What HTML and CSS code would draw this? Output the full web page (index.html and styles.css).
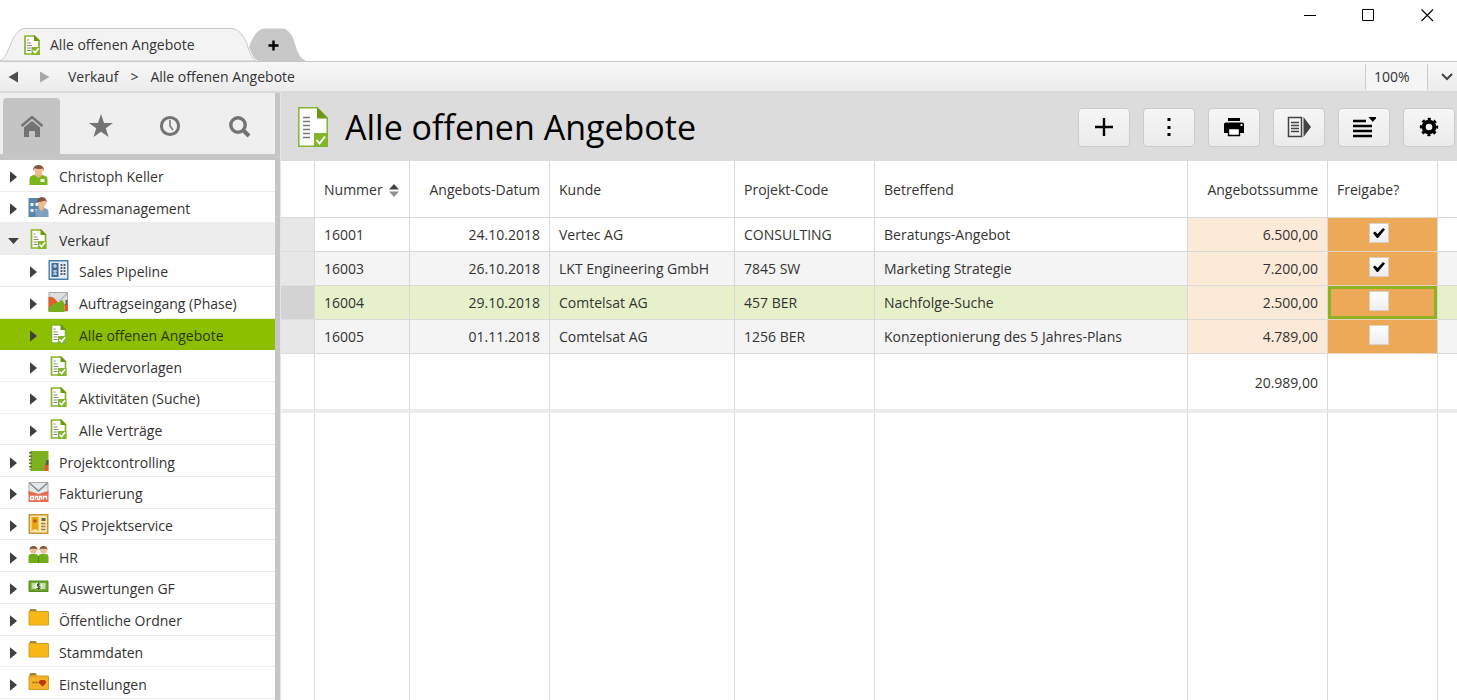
FILE: index.html
```html
<!DOCTYPE html>
<html lang="de">
<head>
<meta charset="utf-8">
<title>Alle offenen Angebote</title>
<link rel="stylesheet" href="styles.css">
</head>
<body>
<svg class="sprite" aria-hidden="true">
  <symbol id="doc" viewBox="0 0 30 40">
    <path d="M.8.8H19L29.200 11V39.200H.8z" fill="#fff" stroke="#86b52a" stroke-width="1.500"/>
    <path d="M19 0L30 11.500H19z" fill="#6a9a12"/>
    <path d="M5 10.500h7M5 14.500h7M5 18.500h7M5 22.500h7M5 26.500h7M5 30.500h7" stroke="#777" stroke-width="1.300"/>
    <path d="M16 26h14v14H16z" fill="#83b62a"/>
    <path d="M18.500 33l3 3.500L27 29.500" fill="none" stroke="#fff" stroke-width="1.900"/>
  </symbol>
  <symbol id="doc-small" viewBox="0 0 16 20">
    <path d="M1 1h9.500L15 5.500V19H1z" fill="#fff" stroke="#86b52a" stroke-width="1.700"/>
    <path d="M10 0l6 6h-6z" fill="#6a9a12"/>
    <path d="M3 5h2M3 8h4M3 10.500h5M3 13h4M3 15.500h4" stroke="#858a7c" stroke-width="1.200"/>
    <path d="M7.500 12H16v8H7.500z" fill="#83b62a"/>
    <path d="M9 15.500l2 2.300 3.700-4.500" fill="none" stroke="#fff" stroke-width="1.600"/>
  </symbol>
  <symbol id="right" viewBox="0 0 11 12"><path d="M2 .3L9 6 2 11.700z" fill="#404040"/></symbol>
  <symbol id="down" viewBox="0 0 11 12"><path d="M0 3h11L5.500 9z" fill="#404040"/></symbol>
  <symbol id="person" viewBox="0 0 20 20">
    <path d="M1 20v-6q0-3 4-4h9q5 1 5 4v6z" fill="#7db61c"/>
    <path d="M6 10l4 3 4-3-1-2H7z" fill="#e9b58c"/>
    <circle cx="10" cy="5.500" r="4.300" fill="#efbd93"/>
    <path d="M4.800 6Q4 .3 10 0q6 .3 5.200 6L14 3.500Q10 4.800 6 3.300z" fill="#84543a"/>
    <path d="M12 14h4v3h-4z" fill="#f4fbe8"/>
  </symbol>
  <symbol id="contact" viewBox="0 0 20 20">
    <path d="M0 1h11v19H0z" fill="#5786ad"/>
    <path d="M2 6h3v3H2zM7 6h3v3H7zM2 12h3v3H2zM7 12h3v3H7z" fill="#f0f7fc"/>
    <path d="M7 20v-5q0-3 4-4h5q4 1 4 4v5z" fill="#7e9fbd"/>
    <path d="M10 11l3 3.500L16 11v-2h-6z" fill="#e9b58c"/>
    <circle cx="13.500" cy="5.500" r="4.300" fill="#efbd93"/>
    <path d="M8.500 5Q8.500.3 13.500 0q5 .3 4.700 6L17 3.500Q12 5 8.500 5z" fill="#84543a"/>
  </symbol>
  <symbol id="pipeline" viewBox="0 0 20 20">
    <path d="M.7.700h18.600v18.600H.7z" fill="#e4edf4" stroke="#487ca5" stroke-width="1.400"/>
    <path d="M3 3h7v14H3z" fill="#3f6f98"/><path d="M6.500 4v4M4.500 6h4M4.500 11h4M4.500 14h4M6.500 10v5" stroke="#dcebf5"/>
    <path d="M13 4v12M16 4v12" stroke="#555" stroke-width="1.800" stroke-dasharray="2 1"/>
  </symbol>
  <symbol id="chart" viewBox="0 0 20 20">
    <path d="M.5.500h18.500v18.500H.5z" fill="#dedede" stroke="#aaa"/>
    <path d="M0 5q5-1 9 5l2 4-11 5z" fill="#e0602c"/>
    <path d="M0 20v-4l5-4 5-2 4-2 2 4v8z" fill="#78ae1b"/>
    <path d="M16 12h3.500v7H16z" fill="#e0602c"/><path d="M17 8h2v5h-2z" fill="#666"/>
    <path d="M11 9l8-8" stroke="#999"/>
  </symbol>
  <symbol id="notebook" viewBox="0 0 20 20">
    <path d="M2 0h18v20H2z" fill="#7cb01d"/><path d="M2 1v18" stroke="#57743a" stroke-width="3" stroke-dasharray="1.500 2"/>
    <path d="M18 9l-1 5h3V9z" fill="#555"/><path d="M16 14h4v6h-4z" fill="#e25d33"/>
  </symbol>
  <symbol id="invoice" viewBox="0 0 20 20">
    <path d="M.5.500h19v12H.5z" fill="#e5e8e9" stroke="#a5a9aa"/><path d="M1 1l9 8 9-8" fill="none" stroke="#7f8a90" stroke-width="1.500"/>
    <path d="M0 9l4 1 6 2 6-2 4-1v11H0z" fill="#e66c50"/>
    <path d="M2 17.500v-3h3v3zM7 17.500v-3h2v3h2v-3h2v3M15 17.500v-3h3v3" fill="none" stroke="#fff" stroke-width="1.300"/>
  </symbol>
  <symbol id="certificate" viewBox="0 0 20 20">
    <path d="M.8.800h18.400v18.400H.8z" fill="#fbe9b4" stroke="#c9952e" stroke-width="1.600"/>
    <path d="M3 3h7v14l-3.500-2L3 17z" fill="#e9a413"/><circle cx="6.500" cy="7" r="1.800" fill="#bb5113"/>
    <path d="M13 4h4v3h-4z" fill="#746230"/><path d="M12.500 9.500H17M12.500 12.500H17M12.500 15.500H17" stroke="#9b8242" stroke-width="1.500"/>
  </symbol>
  <symbol id="people" viewBox="0 0 20 20">
    <path d="M0 17v-6q0-3 3-3h4q3 0 3 3v6zM10 17v-6q0-3 3-3h4q3 0 3 3v6z" fill="#71ad19"/>
    <path d="M10 10v7" stroke="#4c8410" stroke-width=".8"/>
    <circle cx="5" cy="4.500" r="3.300" fill="#efbd93"/><circle cx="15" cy="4.500" r="3.300" fill="#efbd93"/>
    <path d="M1 4Q1 0 5 0t4 4L7.500 2.800h-5zM11 4q0-4 4-4t4 4l-1.500-1.200h-5z" fill="#84543a"/>
  </symbol>
  <symbol id="money" viewBox="0 0 20 20">
    <path d="M.5 4h19v10.500H.5z" fill="#6da52c" stroke="#568b22"/><path d="M3 6h14v6H3z" fill="#c6dfa0"/>
    <ellipse cx="10" cy="9" rx="4" ry="3.500" fill="#eaf4da"/><path d="M12 7H9v2.200h2.500v2.300H8M10.200 5v8" fill="none" stroke="#35591b"/>
  </symbol>
  <symbol id="folder" viewBox="0 0 20 20">
    <path d="M1 3V1l1-1h5l2 2.500z" fill="#a8842f"/>
    <path d="M.5 2.500H20v13.500H.5z" fill="#f8b817" stroke="#dda01c"/>
  </symbol>
  <symbol id="folder-heart" viewBox="0 0 20 20">
    <path d="M1 3V1l1-1h5l2 2.500z" fill="#a8842f"/>
    <path d="M.5 3H20v13.500H.5z" fill="#f4b326" stroke="#d39a21"/>
    <path d="M4 9.500h7" stroke="#8e6424" stroke-width="1.500" stroke-dasharray="2 1"/>
    <path d="M14 13.500L10.500 10q-.5-3.500 3.500-3 4-.5 3.500 3z" fill="#b8370e"/>
  </symbol>
</svg>

<header class="titlebar">
  <nav class="tabs" aria-label="Tabs">
    <button class="tab">
      <svg class="tab-shape" viewBox="0 0 256 33"><path d="M0 33Q5 31 9 20 16 1 24 .5H232Q241 1 247 16 251 31 256 33z" fill="#f3f3f3" stroke="#c9c9c9"/></svg>
      <svg class="tab-icon" width="16" height="20"><use href="#doc-small"/></svg>
      <span>Alle offenen Angebote</span>
    </button>
    <button class="tab-add" aria-label="Neuer Tab">
      <svg width="58" height="33" viewBox="0 0 58 33"><path d="M1 19Q7 1 17 .5H34Q43 1 47 16 51 31 58 33H10Q5 31 1 19z" fill="#c8c8c8"/><path d="M25.500 12.500v10M20.500 17.500h10" stroke="#000" stroke-width="2.400"/></svg>
    </button>
  </nav>
  <div class="window-buttons">
    <button aria-label="Minimieren"><svg width="13" height="13"><path d="M1 6.500h12" stroke="#000"/></svg></button>
    <button aria-label="Maximieren"><svg width="13" height="13"><path d="M.5.500h11v11H.5z" fill="none" stroke="#000"/></svg></button>
    <button aria-label="Schließen"><svg width="13" height="13"><path d="M.5.500l11.500 11.500M12 .5L.5 12" stroke="#000" stroke-width="1.100"/></svg></button>
  </div>
</header>

<div class="pathbar">
  <button class="path-button" aria-label="Zurück"><svg width="10" height="12"><path d="M10 .5L.5 6l9.500 5.500z" fill="#4d4d4d"/></svg></button>
  <button class="path-button" aria-label="Vorwärts"><svg width="10" height="12"><path d="M0 .5L9.500 6 0 11.500z" fill="#a8a8a8"/></svg></button>
  <nav class="crumbs" aria-label="Pfad"><a href="#verkauf">Verkauf</a><span>&gt;</span><a href="#angebote">Alle offenen Angebote</a></nav>
  <div class="zoom">
    <input class="zoom-value" aria-label="Zoom" value="100%">
    <button class="zoom-open" aria-label="Zoom wählen"><svg width="12" height="8"><path d="M1 1l5 5 5-5" fill="none" stroke="#444" stroke-width="2"/></svg></button>
  </div>
</div>

<div class="workspace">
  <aside class="sidebar">
    <div class="side-tabs">
      <button class="side-tab active" aria-label="Start"><svg width="24" height="24" viewBox="0 0 24 24"><path d="M1.500 12L12 3l10.500 9" fill="none" stroke="#737373" stroke-width="2.400"/><path d="M4 13.500L12 7l8 6.500V23h-5v-6H9v6H4z" fill="#737373"/></svg></button>
      <button class="side-tab" aria-label="Favoriten"><svg width="24" height="24" viewBox="0 0 24 24"><path d="M12 0l3 9h9l-7.200 5.300L19.500 23 12 17.800 4.500 23l2.700-8.700L0 9h9z" fill="#737373"/></svg></button>
      <button class="side-tab" aria-label="Verlauf"><svg width="24" height="24" viewBox="0 0 24 24"><circle cx="12" cy="12" r="8.600" fill="none" stroke="#737373" stroke-width="3"/><path d="M12 6v6l3 4" fill="none" stroke="#737373" stroke-width="1.500"/></svg></button>
      <button class="side-tab" aria-label="Suche"><svg width="24" height="24" viewBox="0 0 24 24"><circle cx="11" cy="11" r="7.200" fill="none" stroke="#737373" stroke-width="3.400"/><path d="M16 16l6 6" stroke="#737373" stroke-width="4"/></svg></button>
    </div>
    <ul class="tree">
      <li class="node"><svg class="arrow"><use href="#right"/></svg><svg class="icon"><use href="#person"/></svg><a href="#n1">Christoph Keller</a></li>
      <li class="node"><svg class="arrow"><use href="#right"/></svg><svg class="icon"><use href="#contact"/></svg><a href="#n2">Adressmanagement</a></li>
      <li class="node open"><svg class="arrow"><use href="#down"/></svg><svg class="icon"><use href="#doc-small"/></svg><a href="#n3">Verkauf</a></li>
      <li class="node child"><svg class="arrow"><use href="#right"/></svg><svg class="icon"><use href="#pipeline"/></svg><a href="#n4">Sales Pipeline</a></li>
      <li class="node child"><svg class="arrow"><use href="#right"/></svg><svg class="icon"><use href="#chart"/></svg><a href="#n5">Auftragseingang (Phase)</a></li>
      <li class="node child selected"><svg class="arrow"><use href="#right"/></svg><svg class="icon"><use href="#doc-small"/></svg><a href="#n6">Alle offenen Angebote</a></li>
      <li class="node child"><svg class="arrow"><use href="#right"/></svg><svg class="icon"><use href="#doc-small"/></svg><a href="#n7">Wiedervorlagen</a></li>
      <li class="node child"><svg class="arrow"><use href="#right"/></svg><svg class="icon"><use href="#doc-small"/></svg><a href="#n8">Aktivitäten (Suche)</a></li>
      <li class="node child"><svg class="arrow"><use href="#right"/></svg><svg class="icon"><use href="#doc-small"/></svg><a href="#n9">Alle Verträge</a></li>
      <li class="node"><svg class="arrow"><use href="#right"/></svg><svg class="icon"><use href="#notebook"/></svg><a href="#n10">Projektcontrolling</a></li>
      <li class="node"><svg class="arrow"><use href="#right"/></svg><svg class="icon"><use href="#invoice"/></svg><a href="#n11">Fakturierung</a></li>
      <li class="node"><svg class="arrow"><use href="#right"/></svg><svg class="icon"><use href="#certificate"/></svg><a href="#n12">QS Projektservice</a></li>
      <li class="node"><svg class="arrow"><use href="#right"/></svg><svg class="icon"><use href="#people"/></svg><a href="#n13">HR</a></li>
      <li class="node"><svg class="arrow"><use href="#right"/></svg><svg class="icon"><use href="#money"/></svg><a href="#n14">Auswertungen GF</a></li>
      <li class="node"><svg class="arrow"><use href="#right"/></svg><svg class="icon"><use href="#folder"/></svg><a href="#n15">Öffentliche Ordner</a></li>
      <li class="node"><svg class="arrow"><use href="#right"/></svg><svg class="icon"><use href="#folder"/></svg><a href="#n16">Stammdaten</a></li>
      <li class="node"><svg class="arrow"><use href="#right"/></svg><svg class="icon"><use href="#folder-heart"/></svg><a href="#n17">Einstellungen</a></li>
    </ul>
  </aside>

  <main class="content">
    <div class="page-head">
      <svg class="page-icon" width="30" height="40"><use href="#doc"/></svg>
      <h1>Alle offenen Angebote</h1>
      <div class="toolbar">
        <button aria-label="Neu"><svg width="24" height="24" viewBox="0 0 24 24"><path d="M12 3v18M3 12h18" stroke="#000" stroke-width="2.400"/></svg></button>
        <button aria-label="Mehr"><svg width="24" height="24" viewBox="0 0 24 24"><path d="M10.500 3h3v3h-3zM10.500 11h3v3h-3zM10.500 18h3v3h-3z"/></svg></button>
        <button aria-label="Drucken"><svg width="24" height="24" viewBox="0 0 24 24"><path d="M6 3h12v3H6zM2 9q0-1.500 2-1.500h16q2 0 2 1.500v9H2z"/><path d="M6.500 13.500h11v7h-11z" fill="#fff" stroke="#000" stroke-width="1.400"/><path d="M18.500 9h2v2h-2z" fill="#eee"/></svg></button>
        <button aria-label="Exportieren"><svg width="24" height="24" viewBox="0 0 24 24"><path d="M1.500 2.500h13v19h-13z" fill="none" stroke="#444" stroke-width="1.500"/><path d="M4 7.500h8M4 10.500h8M4 13.500h8M4 16.500h8" stroke="#444" stroke-width="1.300"/><path d="M16.500 2L24 12l-7.500 10z" fill="#444"/></svg></button>
        <button aria-label="Liste"><svg width="24" height="24" viewBox="0 0 24 24"><path d="M1 6h13M1 11h19M1 16h19M1 21h19" stroke="#000" stroke-width="2.600"/><path d="M16.500 2H25l-4.200 5z"/></svg></button>
        <button aria-label="Einstellungen"><svg width="24" height="24" viewBox="0 0 24 24"><circle cx="12" cy="12" r="5.300" fill="none" stroke="#000" stroke-width="4"/><circle cx="12" cy="12" r="8" fill="none" stroke="#000" stroke-width="2.400" stroke-dasharray="3.140 3.143" stroke-dashoffset="1.570"/></svg></button>
      </div>
    </div>
    <div class="grid-wrap">
      <table class="offers">
        <colgroup><col class="c-mark"><col class="c-number"><col class="c-date"><col class="c-customer"><col class="c-code"><col class="c-subject"><col class="c-sum"><col class="c-release"><col></colgroup>
        <thead><tr><th></th><th><button class="sort">Nummer<svg width="10" height="13"><path d="M0 5.500L5 0l5 5.500z" fill="#444"/><path d="M0 7.500h10L5 13z" fill="#909090"/></svg></button></th><th class="num">Angebots-Datum</th><th>Kunde</th><th>Projekt-Code</th><th>Betreffend</th><th class="num">Angebotssumme</th><th>Freigabe?</th><th></th></tr></thead>
        <tbody>
          <tr><td class="mark"></td><td>16001</td><td class="num">24.10.2018</td><td>Vertec AG</td><td>CONSULTING</td><td>Beratungs-Angebot</td><td class="num sum">6.500,00</td><td class="release"><input type="checkbox" aria-label="Freigabe 16001" checked></td><td></td></tr>
          <tr class="alt"><td class="mark"></td><td>16003</td><td class="num">26.10.2018</td><td>LKT Engineering GmbH</td><td>7845 SW</td><td>Marketing Strategie</td><td class="num sum">7.200,00</td><td class="release"><input type="checkbox" aria-label="Freigabe 16003" checked></td><td></td></tr>
          <tr class="current"><td class="mark"></td><td>16004</td><td class="num">29.10.2018</td><td>Comtelsat AG</td><td>457 BER</td><td>Nachfolge-Suche</td><td class="num sum">2.500,00</td><td class="release"><input type="checkbox" aria-label="Freigabe 16004"></td><td></td></tr>
          <tr class="alt"><td class="mark"></td><td>16005</td><td class="num">01.11.2018</td><td>Comtelsat AG</td><td>1256 BER</td><td>Konzeptionierung des 5 Jahres-Plans</td><td class="num sum">4.789,00</td><td class="release"><input type="checkbox" aria-label="Freigabe 16005"></td><td></td></tr>
          <tr class="total"><td></td><td></td><td></td><td></td><td></td><td></td><td class="num">20.989,00</td><td></td><td></td></tr>
          <tr class="filler"><td></td><td></td><td></td><td></td><td></td><td></td><td></td><td></td><td></td></tr>
        </tbody>
      </table>
    </div>
  </main>
</div>
</body>
</html>
```
FILE: styles.css
```css
* { box-sizing: border-box; }
html, body { height: 100%; }
body {
  margin: 0;
  display: flex;
  flex-direction: column;
  background: #fff;
  color: #333;
  font: 14px/20px "Open Sans", "Noto Sans", sans-serif;
}
button { margin: 0; padding: 0; border: 0; background: none; color: inherit; font: inherit; }
a { color: inherit; text-decoration: none; }
svg { display: block; flex: none; }
.sprite { position: absolute; width: 0; height: 0; }

.titlebar { display: flex; justify-content: space-between; height: 61px; flex: none; }
.tabs { display: flex; align-items: flex-end; }
.tab {
  position: relative;
  z-index: 1;
  display: flex;
  align-items: center;
  gap: 10px;
  width: 256px;
  height: 33px;
  padding-left: 24px;
}
.tab-shape { position: absolute; inset: 0; }
.tab-icon, .tab span { position: relative; }
.tab-add { margin-left: -8px; }
.window-buttons { display: flex; height: 30px; }
.window-buttons button { display: flex; align-items: center; justify-content: center; width: 59px; }

.pathbar {
  display: flex;
  align-items: center;
  flex: none;
  height: 32px;
  padding: 1px 0 0 8px;
  border-top: 1px solid #c8c8c8;
  border-bottom: 2px solid #dadada;
  background: linear-gradient(#f7f7f7, #ececec);
}
.path-button { width: 32px; }
.crumbs { display: flex; gap: 12px; flex: 1; margin-left: -4px; }
.zoom { display: flex; height: 26px; }
.zoom-value {
  width: 62px;
  padding: 0 8px;
  border: solid #ccc;
  border-width: 0 0 0 1px;
  background: #f5f5f5;
  color: inherit;
  font: inherit;
}
.zoom-open { display: flex; align-items: center; width: 30px; padding-left: 13px; border-left: 1px solid #ccc; }

.workspace { display: flex; flex: 1; min-height: 0; }
.sidebar {
  display: flex;
  flex-direction: column;
  flex: none;
  width: 280px;
  border-right: 5px solid #c6c6c6;
  overflow: hidden;
}
.side-tabs {
  display: flex;
  gap: 12px;
  flex: none;
  height: 67px;
  padding: 5px 3px 0;
  border-bottom: 6px solid #c6c6c6;
  background: #efefef;
}
.side-tab { display: flex; align-items: center; justify-content: center; width: 57px; border-radius: 4px 4px 0 0; }
.side-tab.active { background: #c4c4c4; }

.tree { display: flex; flex-direction: column; flex: 1; min-height: 0; margin: 0; padding: 0 0 1px; list-style: none; overflow: auto; }
.node {
  display: flex;
  align-items: center;
  flex: 1 0 28px;
  max-height: 32px;
  padding: 4px 0 0 8px;
  border-bottom: 1px solid #ececec;
}
.node.child { padding-left: 28px; }
.node.open { background: #ededed; }
.node.selected { background: #8cbf00; border-color: #8cbf00; color: #2b3a00; }
.arrow { width: 11px; height: 12px; margin-right: 9px; }
.icon { width: 21px; height: 20px; margin: 0 10px 4px 0; }

.content { display: flex; flex-direction: column; flex: 1; min-width: 0; border-left: 1px solid #e4e4e4; }
.page-head { display: flex; align-items: center; flex: none; height: 68px; padding: 0 2px 0 17px; background: #dcdcdc; }
.page-head h1 { flex: 1; margin: 0 0 0 17px; color: #000; font-size: 34px; font-weight: 400; line-height: 48px; white-space: nowrap; }
.toolbar { display: flex; gap: 13px; }
.toolbar button {
  display: flex;
  align-items: center;
  justify-content: center;
  width: 52px;
  height: 39px;
  border: 1px solid #cbcbcb;
  border-radius: 4px;
  background: linear-gradient(#f6f6f6, #ebebeb);
}

.grid-wrap { display: grid; flex: 1; min-height: 0; overflow: auto; }
.offers { width: 100%; height: 100%; table-layout: fixed; border-spacing: 0; }
.c-mark { width: 34px; }
.c-number { width: 95px; }
.c-date, .c-code, .c-sum { width: 140px; }
.c-customer { width: 185px; }
.c-subject { width: 313px; }
.c-release { width: 110px; }
.offers th, .offers td {
  height: 34px;
  padding: 0 9px;
  border: solid #d9d9d9;
  border-width: 0 1px 1px 0;
  font-weight: 400;
  text-align: left;
  white-space: nowrap;
}
.offers th:last-child, .offers td:last-child { border-right: 0; }
.offers th { height: 57px; padding-top: 2px; }
.offers .num { text-align: right; }
.sort { display: flex; align-items: center; gap: 6px; }
.offers .mark { background: #e7e7e7; border-bottom-color: #dedede; }
.alt { background: #f4f4f4; }
.current { background: #e6f1cb; }
.offers .current .mark { background: #d3d3d3; }
.offers .sum { background: #fbead7; }
.offers .release { padding: 0 7px 0 0; background: #eca958; border-bottom-color: #e3d3c0; }
.offers .current .release { box-shadow: inset 0 0 0 3px #8fb222; }
.release input {
  display: block;
  appearance: none;
  width: 20px;
  height: 20px;
  margin: 0 auto 3px;
  padding: 4px 3px;
  border: 1px solid #d8d0c6;
  background: linear-gradient(#fff, #ededed);
}
.release input:checked::before {
  content: "";
  display: block;
  width: 12px;
  height: 10px;
  background: #000;
  clip-path: polygon(0 50%, 16% 34%, 38% 60%, 84% 0, 100% 15%, 42% 100%, 32% 100%);
}
.offers .total td { height: 59px; border-bottom: 4px solid #ececec; padding-top: 2px; }
.offers .filler td { height: auto; border-bottom: 0; }
```
